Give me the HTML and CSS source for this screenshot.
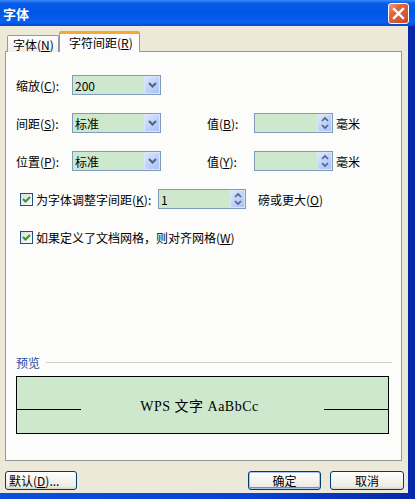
FILE: index.html
```html
<!DOCTYPE html>
<html>
<head>
<meta charset="utf-8">
<link rel="stylesheet" href="styles.css">
</head>
<body>
<div class="window">
  <div class="titlebar">
    <span class="title">字体</span>
    <span class="close">
      <svg width="13" height="13" viewBox="0 0 13 13"><path d="M2 2 L11 11 M11 2 L2 11" stroke="#fff" stroke-width="2.4" stroke-linecap="square"/></svg>
    </span>
  </div>
  <div class="frame">
    <div class="client">
      <div class="tabs">
        <div class="tab">字体(<u>N</u>)</div>
        <div class="tab active">字符间距(<u>R</u>)</div>
      </div>
      <div class="panel">
        <div class="row">
          <span class="lbl">缩放(<u>C</u>):</span>
          <div class="combo"><span class="val">200</span><span class="btn"><svg width="9" height="6" viewBox="0 0 9 6"><path d="M1 1 L4.5 4.5 L8 1" fill="none" stroke="#4d6185" stroke-width="2"/></svg></span></div>
        </div>
        <div class="row">
          <span class="lbl">间距(<u>S</u>):</span>
          <div class="combo"><span class="val">标准</span><span class="btn"><svg width="9" height="6" viewBox="0 0 9 6"><path d="M1 1 L4.5 4.5 L8 1" fill="none" stroke="#4d6185" stroke-width="2"/></svg></span></div>
          <span class="lbl2">值(<u>B</u>):</span>
          <div class="spin"><span class="val"></span><span class="btn2"><svg width="8" height="14" viewBox="0 0 8 14"><path d="M1 5 L4 2 L7 5 M1 9 L4 12 L7 9" fill="none" stroke="#4d6185" stroke-width="1.6"/></svg></span></div>
          <span class="unit">毫米</span>
        </div>
        <div class="row">
          <span class="lbl">位置(<u>P</u>):</span>
          <div class="combo"><span class="val">标准</span><span class="btn"><svg width="9" height="6" viewBox="0 0 9 6"><path d="M1 1 L4.5 4.5 L8 1" fill="none" stroke="#4d6185" stroke-width="2"/></svg></span></div>
          <span class="lbl2">值(<u>Y</u>):</span>
          <div class="spin"><span class="val"></span><span class="btn2"><svg width="8" height="14" viewBox="0 0 8 14"><path d="M1 5 L4 2 L7 5 M1 9 L4 12 L7 9" fill="none" stroke="#4d6185" stroke-width="1.6"/></svg></span></div>
          <span class="unit">毫米</span>
        </div>
        <div class="row crow">
          <span class="check"><svg width="11" height="11" viewBox="0 0 11 11"><path d="M2 5 L4.5 7.5 L9 3" fill="none" stroke="#21a121" stroke-width="2"/></svg></span>
          <span class="clbl">为字体调整字间距(<u>K</u>):</span>
          <div class="spin spin-k"><span class="val">1</span><span class="btn2"><svg width="8" height="14" viewBox="0 0 8 14"><path d="M1 5 L4 2 L7 5 M1 9 L4 12 L7 9" fill="none" stroke="#4d6185" stroke-width="1.6"/></svg></span></div>
          <span class="unit2">磅或更大(<u>O</u>)</span>
        </div>
        <div class="row crow">
          <span class="check"><svg width="11" height="11" viewBox="0 0 11 11"><path d="M2 5 L4.5 7.5 L9 3" fill="none" stroke="#21a121" stroke-width="2"/></svg></span>
          <span class="clbl2">如果定义了文档网格，则对齐网格(<u>W</u>)</span>
        </div>
        <div class="preview-head">
          <span class="plbl">预览</span>
          <span class="pline"></span>
        </div>
        <div class="preview">
          <span class="side left"></span>
          <span class="ptext">WPS 文字 AaBbCc</span>
          <span class="side right"></span>
        </div>
      </div>
      <div class="buttons">
        <button class="b b-def">默认(<u>D</u>)...</button>
        <span class="grow"></span>
        <button class="b b-ok">确定</button>
        <button class="b b-cancel">取消</button>
      </div>
    </div>
  </div>
</div>
</body>
</html>
```

FILE: styles.css
```css
* { box-sizing: border-box; }
html, body { margin: 0; padding: 0; }
body {
  width: 415px;
  height: 499px;
  overflow: hidden;
  font-family: "Noto Sans CJK SC", "Liberation Sans", sans-serif;
  font-size: 12px;
  color: #000;
  background: #0842d8;
}
u { text-decoration: underline; text-underline-offset: 1px; }
.window { display: flex; flex-direction: column; width: 415px; height: 499px; }
.titlebar {
  height: 26px;
  display: flex;
  align-items: center;
  padding: 0 6px 0 3px;
  background: linear-gradient(to bottom, #3a8cf8 0%, #0a5cea 12%, #0055e5 50%, #0a5fee 85%, #0049d4 100%);
}
.title {
  color: #fff;
  font-weight: bold;
  font-size: 13px;
  flex: 1;
}
.close {
  width: 21px;
  height: 21px;
  border: 1px solid #fff;
  border-radius: 3px;
  background: linear-gradient(135deg, #ee9a7d 0%, #e0643c 35%, #c84b25 100%);
  display: flex;
  align-items: center;
  justify-content: center;
}
.frame {
  flex: 1;
  display: flex;
  padding: 0 7px 6px 0;
  background: linear-gradient(to right, #0a4ee0 0%, #0842d8 60%, #0628a8 100%);
}
.client {
  flex: 1;
  background: #ece9d8;
  display: flex;
  flex-direction: column;
}
.tabs {
  display: flex;
  align-items: flex-end;
  height: 26px;
  padding-left: 7px;
  margin-bottom: -1px;
  position: relative;
  z-index: 1;
}
.tab {
  height: 17px;
  padding: 0 0 0 5px;
  width: 52px;
  border: 1px solid #919b9c;
  border-bottom: none;
  border-radius: 2px 2px 0 0;
  background: linear-gradient(to bottom, #fefefe, #f2f1eb);
  display: flex;
  align-items: center;
  font-size: 12px;
  white-space: nowrap;
}
.tab.active {
  width: 81px;
  height: 21px;
  background: #fcfcfe;
  border-top: 3px solid #f5a834;
  border-left: 1px solid #919b9c;
  border-right: 1px solid #919b9c;
  padding: 0 0 2px 9px;
}
.panel {
  margin-left: 5px;
  width: 397px;
  height: 410px;
  border: 1px solid #919b9c;
  background: #fcfcfb;
  padding: 23px 0 0 10px;
  display: flex;
  flex-direction: column;
  align-items: flex-start;
}
.row {
  display: flex;
  align-items: center;
  height: 20px;
  margin-bottom: 18px;
}
.lbl { width: 56px; white-space: nowrap; }
.combo, .spin {
  position: relative;
  height: 20px;
  border: 1px solid #7f9db9;
  background: #cde8cd;
  display: flex;
  align-items: center;
}
.combo { width: 89px; }
.val { padding-left: 2px; flex: 1; }
.btn {
  width: 16px;
  height: 18px;
  background: linear-gradient(135deg, #dce7fb 0%, #bccffa 60%, #aec3f3 100%);
  border: 1px solid #dbe5fa;
  border-radius: 1px;
  display: flex;
  align-items: center;
  justify-content: center;
}
.lbl2 { margin-left: 46px; width: 47px; white-space: nowrap; }
.spin { width: 79px; }
.btn2 {
  width: 15px;
  height: 18px;
  background: linear-gradient(135deg, #dce7fb 0%, #bccffa 60%, #aec3f3 100%);
  border: 1px solid #dbe5fa;
  display: flex;
  align-items: center;
  justify-content: center;
}
.unit { margin-left: 3px; }
.check {
  width: 13px;
  height: 13px;
  margin-left: 4px;
  border: 1px solid #1c5180;
  background: linear-gradient(135deg, #dcdcd7, #fff);
  display: flex;
  align-items: center;
  justify-content: center;
}
.clbl { margin-left: 3px; width: 122px; white-space: nowrap; }
.spin-k { width: 88px; }
.unit2 { margin-left: 12px; }
.clbl2 { margin-left: 3px; white-space: nowrap; }
.preview-head {
  margin-top: 90px;
  display: flex;
  align-items: center;
  height: 14px;
  width: 376px;
}
.plbl { color: #1d4ea0; width: 30px; }
.pline { flex: 1; height: 1px; background: #d0d0bf; }
.preview {
  margin-top: 7px;
  width: 373px;
  height: 58px;
  border: 1px solid #000;
  background: #cde8cd;
  display: flex;
  align-items: center;
}
.side { height: 1px; background: #000; width: 64px; margin-top: 8px; }
.ptext {
  flex: 1;
  text-align: center;
  font-family: "Liberation Serif", "Noto Sans CJK SC", serif;
  font-weight: normal;
  font-size: 14px;
  letter-spacing: 0.5px;
  padding-right: 6px;
}
.buttons {
  display: flex;
  margin-top: 10px;
  padding: 0 4px 0 5px;
  height: 19px;
}
.grow { flex: 1; }
.b {
  height: 19px;
  font-family: "Noto Sans CJK SC", sans-serif;
  font-size: 12px;
  border: 1px solid #003c74;
  border-radius: 3px;
  background: linear-gradient(to bottom, #fff 0%, #f4f3ee 50%, #ecebe6 85%, #d6d0c5 100%);
  padding: 0;
  line-height: 15px;
  color: #000;
}
.b-def { width: 72px; text-align: left; padding-left: 3px; }
.b-ok { width: 73px; box-shadow: inset 0 0 0 1px #a8c4f0, inset 0 -1px 0 1px #6b8fdc; margin-right: 9px; }
.b-cancel { width: 74px; }
```
